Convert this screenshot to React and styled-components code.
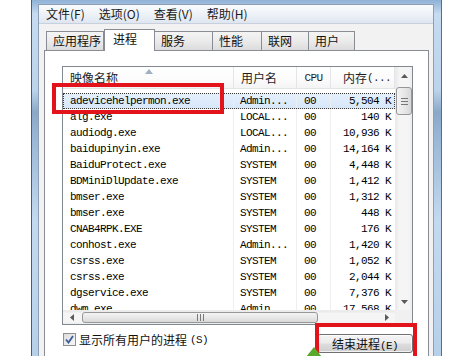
import React from 'react';
import styled, { createGlobalStyle } from 'styled-components';

const CJK = `"Noto Sans CJK SC", "Noto Sans", sans-serif`;
const MONO = `"Liberation Mono", "Noto Sans CJK SC", monospace`;

const GlobalStyle = createGlobalStyle`
  html, body { margin: 0; padding: 0; background: #fff; }
  body { width: 460px; height: 356px; overflow: hidden; font-family: ${CJK}; }
  #root { width: 460px; height: 356px; }
  * { box-sizing: border-box; }
`;

const Page = styled.div`
  position: relative;
  width: 460px;
  height: 356px;
  overflow: hidden;
  background: #fff;
  padding-left: 31px;
`;

const Window = styled.div`
  width: 411px;
  height: 356px;
  border-left: 1px solid #4d5c6e;
  border-right: 1px solid #5d6c7e;
  padding: 4px 7px 0 6px;
  display: flex;
  background: linear-gradient(180deg, #8fb1d6 0px, #c6dbf0 14px, #bcd3ec 90px, #8aa9c9 112px, #9fbcdb 150px, #c3d9f0 220px, #b7d0ea 356px);
`;

const Client = styled.div`
  width: 396px;
  height: 100%;
  border: 1px solid #8d9fb5;
  border-bottom: none;
  background: #f2f2f2;
  display: flex;
  flex-direction: column;
`;

const MenuBar = styled.div`
  height: 19px;
  display: flex;
  border-bottom: 1px solid #c7d0dc;
  background: linear-gradient(180deg, #f9fbfd 0%, #eef2f8 50%, #dfe6f0 100%);
`;

const MenuItem = styled.div`
  padding: 0 7px;
  font: 12px/18px ${CJK};
  color: #1a1a1a;
  white-space: nowrap;
`;

const TabStrip = styled.div`
  height: 26px;
  display: flex;
  align-items: flex-end;
  padding-left: 7px;
`;

const Tab = styled.div`
  position: relative;
  z-index: ${p => (p.$active ? 2 : 1)};
  width: ${p => p.$w}px;
  height: ${p => (p.$active ? 22 : 19)}px;
  margin-bottom: ${p => (p.$active ? -1 : 0)}px;
  padding-left: ${p => (p.$active ? 8 : 6)}px;
  border: 1px solid #898c95;
  border-bottom: none;
  border-left-width: ${p => (p.$first || p.$active ? 1 : 0)}px;
  background: ${p => (p.$active ? '#fff' : 'linear-gradient(180deg, #f4f4f4 0%, #ebebeb 50%, #dcdcdc 100%)')};
  font: 12px/${p => (p.$active ? 17 : 18)}px ${CJK};
  color: #111;
  white-space: nowrap;
`;

const Panel = styled.div`
  flex: 1;
  margin: 0 4px 0 5px;
  border: 1px solid #898c95;
  border-bottom: none;
  background: #fff;
  padding: 15px 14px 0 17px;
`;

const ListView = styled.div`
  width: 351px;
  height: 259px;
  border: 1px solid #828790;
  background: #fff;
  display: grid;
  grid-template-columns: 332px 17px;
  grid-template-rows: 243px 14px;
`;

const ListMain = styled.div`
  overflow: hidden;
  display: flex;
  flex-direction: column;
`;

const COLS = '171px 63px 34px 64px';

const Header = styled.div`
  display: grid;
  grid-template-columns: ${COLS};
  height: 22px;
  flex: none;
  border-bottom: 1px solid #e3e3e3;
  background: linear-gradient(180deg, #ffffff 0%, #fbfbfb 60%, #f4f4f4 100%);
`;

const HeadCell = styled.div`
  position: relative;
  height: 21px;
  border-right: 1px solid #e3e5e8;
  display: flex;
  align-items: center;
  justify-content: ${p => p.$align || 'flex-start'};
  padding: 0 ${p => (p.$align === 'flex-end' ? 3 : 0)}px 0 ${p => (p.$align ? 0 : 7)}px;
  font: 12px/21px ${CJK};
  color: #1e1e1e;
  white-space: nowrap;
`;

const Mono = styled.span`
  font: 11px/16px ${MONO};
  letter-spacing: -0.6px;
`;

const SortArrow = styled.svg`
  position: absolute;
  left: 82px;
  top: 2px;
`;

const Rows = styled.div`
  padding-top: 4px;
  display: flex;
  flex-direction: column;
`;

const Row = styled.div`
  display: grid;
  grid-template-columns: ${COLS};
  height: 16px;
  flex: none;
  background: ${p => (p.$selected ? 'linear-gradient(180deg, #e6f0fc 0%, #d6e7fa 100%)' : 'transparent')};
  outline: ${p => (p.$selected ? '1px dotted #3a3a3a' : 'none')};
  outline-offset: -1px;
`;

const Cell = styled.div`
  border-right: 1px solid ${p => (p.$last ? 'transparent' : '#eeeeee')};
  padding: 0 ${p => (p.$right ? 3 : 0)}px 0 ${p => (p.$right ? 0 : p.$pad || 7)}px;
  text-align: ${p => (p.$right ? 'right' : 'left')};
  font: 11px/16px ${MONO};
  letter-spacing: -0.6px;
  color: #000;
  white-space: nowrap;
  overflow: hidden;
`;

const VScroll = styled.div`
  display: flex;
  flex-direction: column;
  background: linear-gradient(90deg, #e9e9e9 0%, #f5f5f5 20%, #f5f5f5 80%, #ececec 100%);
  border-left: 1px solid #ececec;
`;

const HScroll = styled.div`
  display: flex;
  align-items: stretch;
  background: linear-gradient(180deg, #e9e9e9 0%, #f5f5f5 20%, #f5f5f5 80%, #ececec 100%);
  border-top: 1px solid #ececec;
`;

const ArrowBtn = styled.div`
  flex: none;
  width: ${p => (p.$h ? 17 : 16)}px;
  height: ${p => (p.$h ? 13 : 17)}px;
  display: flex;
  align-items: center;
  justify-content: center;
`;

const Spacer = styled.div`
  flex: 1;
`;

const VThumb = styled.div`
  margin: 3px 0 0 0;
  height: 28px;
  width: 16px;
  border: 1px solid #979797;
  border-radius: 3px;
  background: linear-gradient(90deg, #f3f3f3 0%, #e8e8e8 50%, #d8d8d8 100%);
  display: flex;
  align-items: center;
  justify-content: center;
`;

const HThumb = styled.div`
  margin: 1px 0 1px 2px;
  width: 236px;
  border: 1px solid #979797;
  border-radius: 3px;
  background: linear-gradient(180deg, #f3f3f3 0%, #e8e8e8 50%, #d8d8d8 100%);
  display: flex;
  align-items: center;
  justify-content: center;
`;

const Corner = styled.div`
  background: #f0f0f0;
`;

const Footer = styled.div`
  width: 351px;
  display: flex;
  justify-content: space-between;
  align-items: flex-start;
  padding: 8px 0 0 1px;
`;

const CheckLabel = styled.label`
  display: flex;
  align-items: center;
  gap: 3px;
  height: 13px;
  font: 12px/13px ${CJK};
  color: #111;
  white-space: nowrap;
`;

const CheckBox = styled.span`
  width: 13px;
  height: 13px;
  border: 1px solid #8e8f8f;
  background: linear-gradient(135deg, #dcdcdc 0%, #f7f7f7 100%);
  display: flex;
  align-items: center;
  justify-content: center;
`;

const EndButton = styled.button`
  margin-top: 1px;
  width: 96px;
  height: 19px;
  padding: 0;
  border: 1px solid #707070;
  border-radius: 3px;
  background: linear-gradient(180deg, #f4f4f4 0%, #ececec 48%, #dddddd 52%, #cfcfcf 100%);
  box-shadow: inset 0 0 0 1px rgba(255, 255, 255, 0.7);
  font: 12px/17px ${CJK};
  color: #111;
  white-space: nowrap;
`;

const RedBox = styled.div`
  position: absolute;
  left: ${p => p.$x}px;
  top: ${p => p.$y}px;
  width: ${p => p.$w}px;
  height: ${p => p.$h}px;
  border: 4px solid #e3131b;
  pointer-events: none;
`;

const GreenMark = styled.svg`
  position: absolute;
  left: 306px;
  top: 347px;
`;

const menus = ['文件(F)', '选项(O)', '查看(V)', '帮助(H)'];
const tabs = [
  { label: '应用程序', w: 58 },
  { label: '进程', w: 51, active: true },
  { label: '服务', w: 58 },
  { label: '性能', w: 49 },
  { label: '联网', w: 47 },
  { label: '用户', w: 46 },
];

const rows = [
  ['adevicehelpermon.exe', 'Admin...', '00', '5,504 K'],
  ['alg.exe', 'LOCAL...', '00', '140 K'],
  ['audiodg.exe', 'LOCAL...', '00', '10,936 K'],
  ['baidupinyin.exe', 'Admin...', '00', '14,164 K'],
  ['BaiduProtect.exe', 'SYSTEM', '00', '4,448 K'],
  ['BDMiniDlUpdate.exe', 'SYSTEM', '00', '1,412 K'],
  ['bmser.exe', 'SYSTEM', '00', '1,312 K'],
  ['bmser.exe', 'SYSTEM', '00', '448 K'],
  ['CNAB4RPK.EXE', 'SYSTEM', '00', '176 K'],
  ['conhost.exe', 'Admin...', '00', '1,420 K'],
  ['csrss.exe', 'SYSTEM', '00', '1,052 K'],
  ['csrss.exe', 'SYSTEM', '00', '2,044 K'],
  ['dgservice.exe', 'SYSTEM', '00', '7,376 K'],
  ['dwm.exe', 'Admin...', '00', '17,568 K'],
];

const Tri = ({ dir }) => {
  const pts = {
    up: '0,4 7,4 3.5,0',
    down: '0,0 7,0 3.5,4',
    left: '4,0 4,7 0,3.5',
    right: '0,0 0,7 4,3.5',
  }[dir];
  const w = dir === 'up' || dir === 'down' ? 7 : 4;
  const h = dir === 'up' || dir === 'down' ? 4 : 7;
  return (
    <svg width={w} height={h} viewBox={`0 0 ${w} ${h}`}>
      <polygon points={pts} fill="#5a5a5a" />
    </svg>
  );
};

export default function App() {
  return (
    <>
      <GlobalStyle />
      <Page>
        <Window>
          <Client>
            <MenuBar>
              {menus.map(m => (
                <MenuItem key={m}>{m}</MenuItem>
              ))}
            </MenuBar>
            <TabStrip>
              {tabs.map((t, i) => (
                <Tab key={t.label} $w={t.w} $active={t.active} $first={i === 0}>
                  {t.label}
                </Tab>
              ))}
            </TabStrip>
            <Panel>
              <ListView>
                <ListMain>
                  <Header>
                    <HeadCell>
                      映像名称
                      <SortArrow width="8" height="5" viewBox="0 0 8 5">
                        <polygon points="0,5 8,5 4,0" fill="#9fb0c4" />
                      </SortArrow>
                    </HeadCell>
                    <HeadCell>用户名</HeadCell>
                    <HeadCell $align="center">
                      <Mono>CPU</Mono>
                    </HeadCell>
                    <HeadCell $align="flex-end">
                      内存<Mono>(...</Mono>
                    </HeadCell>
                  </Header>
                  <Rows>
                    {rows.map((r, i) => (
                      <Row key={i} $selected={i === 0}>
                        <Cell>{r[0]}</Cell>
                        <Cell $pad={6}>{r[1]}</Cell>
                        <Cell>{r[2]}</Cell>
                        <Cell $right $last>{r[3]}</Cell>
                      </Row>
                    ))}
                  </Rows>
                </ListMain>
                <VScroll>
                  <ArrowBtn>
                    <Tri dir="up" />
                  </ArrowBtn>
                  <VThumb>
                    <svg width="7" height="7" viewBox="0 0 7 7">
                      <rect x="0" y="0" width="7" height="1" fill="#777" />
                      <rect x="0" y="3" width="7" height="1" fill="#777" />
                      <rect x="0" y="6" width="7" height="1" fill="#777" />
                    </svg>
                  </VThumb>
                  <Spacer />
                  <ArrowBtn>
                    <Tri dir="down" />
                  </ArrowBtn>
                </VScroll>
                <HScroll>
                  <ArrowBtn $h>
                    <Tri dir="left" />
                  </ArrowBtn>
                  <HThumb>
                    <svg width="7" height="7" viewBox="0 0 7 7">
                      <rect x="0" y="0" width="1" height="7" fill="#777" />
                      <rect x="3" y="0" width="1" height="7" fill="#777" />
                      <rect x="6" y="0" width="1" height="7" fill="#777" />
                    </svg>
                  </HThumb>
                  <Spacer />
                  <ArrowBtn $h>
                    <Tri dir="right" />
                  </ArrowBtn>
                </HScroll>
                <Corner />
              </ListView>
              <Footer>
                <CheckLabel>
                  <CheckBox>
                    <svg width="9" height="9" viewBox="0 0 9 9">
                      <path d="M1 4.5 L3.5 7.5 L8 1" stroke="#3a5a9a" strokeWidth="1.8" fill="none" />
                    </svg>
                  </CheckBox>
                  显示所有用户的进程 <Mono>(S)</Mono>
                </CheckLabel>
                <EndButton>
                  结束进程<Mono>(E)</Mono>
                </EndButton>
              </Footer>
            </Panel>
          </Client>
        </Window>
        <RedBox $x={52} $y={83} $w={172} $h={31} />
        <RedBox $x={315} $y={323} $w={102} $h={40} />
        <GreenMark width="16" height="10" viewBox="0 0 16 10">
          <polygon points="8,0 16,10 0,10" fill="#5aa82c" />
        </GreenMark>
      </Page>
    </>
  );
}
